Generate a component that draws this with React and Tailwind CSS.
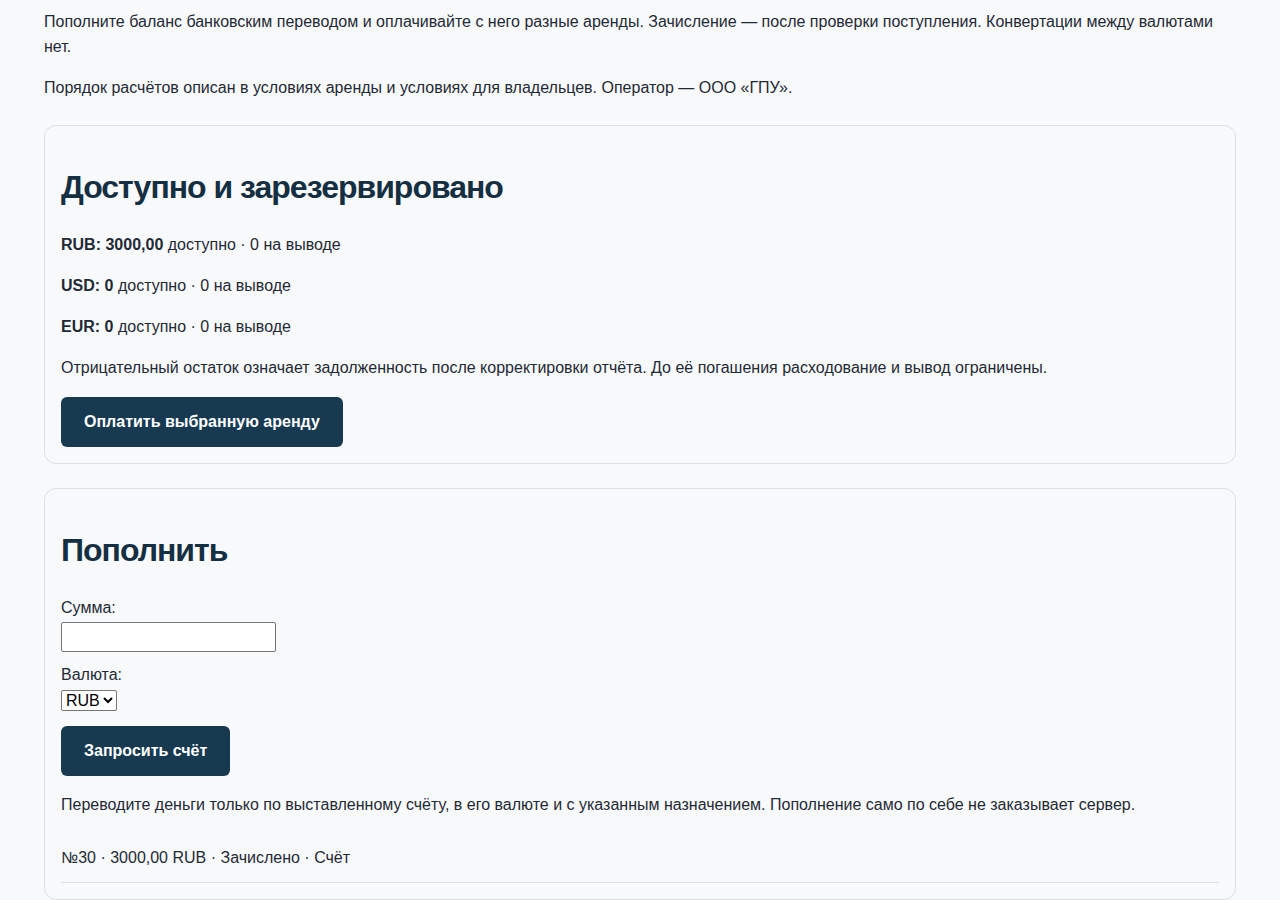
const balances = [
  { code: "RUB", amount: "3000,00" },
  { code: "USD", amount: "0" },
  { code: "EUR", amount: "0" },
];

function Card({ title, children, className = "" }) {
  return (
    <section
      className={`border border-[#dcdfe3] rounded-xl p-4 bg-[#f8f9fb] ${className}`}
    >
      <h2 className="text-[32px] leading-[37px] font-bold text-[#152f42] tracking-[-1px] mt-[26.5px] mb-[26.5px]">
        {title}
      </h2>
      {children}
    </section>
  );
}

function DarkButton({ children }) {
  return (
    <button className="h-[50px] px-[23px] rounded-md bg-[#173a51] text-white font-bold text-base leading-6">
      {children}
    </button>
  );
}

export default function App() {
  return (
    <div
      className="min-h-screen bg-[#f8f9fb] text-[#1f2a35] text-base leading-[25px] px-[44px] pt-[9px]"
      style={{ fontFamily: '"Liberation Sans", Arial, sans-serif' }}
    >
      <p>
        Пополните баланс банковским переводом и оплачивайте с него разные аренды. Зачисление — после
        проверки поступления. Конвертации между валютами нет.
      </p>
      <p className="mt-4">
        Порядок расчётов описан в условиях аренды и условиях для владельцев. Оператор — ООО «ГПУ».
      </p>

      <Card title="Доступно и зарезервировано" className="mt-[25px]">
        {balances.map((b) => (
          <p key={b.code} className="mb-4">
            <b>
              {b.code}: {b.amount}
            </b>{" "}
            доступно · 0 на выводе
          </p>
        ))}
        <p className="mb-[17px]">
          Отрицательный остаток означает задолженность после корректировки отчёта. До её погашения
          расходование и вывод ограничены.
        </p>
        <DarkButton>Оплатить выбранную аренду</DarkButton>
      </Card>

      <Card title="Пополнить" className="mt-6">
        <label className="block">Сумма:</label>
        <input
          type="text"
          className="block mt-[2px] w-[215px] h-[30px] bg-white border border-[#767676] rounded-[2px] px-1"
        />
        <label className="block mt-[10px]">Валюта:</label>
        <select className="block mt-[3px] h-[21px] w-[56px] bg-white border border-[#767676] rounded-[2px] text-base leading-5 text-black">
          <option>RUB</option>
          <option>USD</option>
          <option>EUR</option>
        </select>
        <div className="mt-[15px]">
          <DarkButton>Запросить счёт</DarkButton>
        </div>
        <p className="mt-4">
          Переводите деньги только по выставленному счёту, в его валюте и с указанным назначением.
          Пополнение само по себе не заказывает сервер.
        </p>
        <ul className="mt-4">
          <li className="py-3 border-b border-[#dcdfe3]">№30 · 3000,00 RUB · Зачислено · Счёт</li>
        </ul>
      </Card>
    </div>
  );
}
